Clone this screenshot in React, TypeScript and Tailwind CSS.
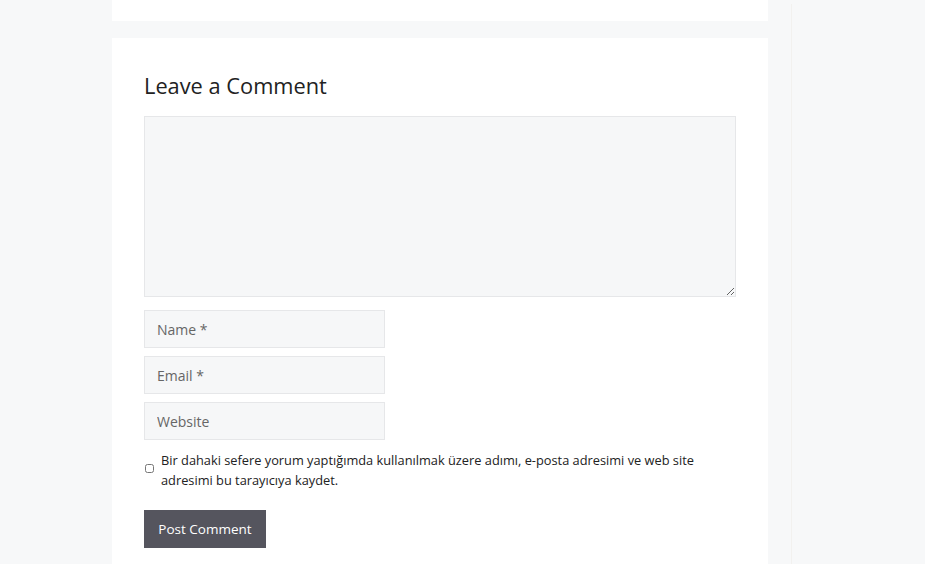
import React from 'react';

export default function App() {
  return (
    <div className="min-h-[564px] bg-[#f7f8f9] font-['Open_Sans',sans-serif] text-[#222]">
      <div className="flex">
        <main className="ml-[112px] w-[656px]">
          <div className="h-[21px] bg-white" />
          <section className="mt-[17px] bg-white px-8 pt-[31px] pb-4">
            <h3 className="text-[21.8px] leading-[34px] text-[#222]">Leave a Comment</h3>
            <form className="mt-[13px]">
              <textarea className="block h-[181px] w-full resize-y border border-[#e6e7e9] bg-[#f6f7f8] outline-none" />
              <div className="mt-[13px] flex flex-col gap-2">
                <input
                  placeholder="Name *"
                  className="h-[38px] w-[241px] border border-[#e6e7e9] bg-[#f6f7f8] px-3 text-[14px] placeholder:text-[#666]"
                />
                <input
                  placeholder="Email *"
                  className="h-[38px] w-[241px] border border-[#e6e7e9] bg-[#f6f7f8] px-3 text-[14px] placeholder:text-[#666]"
                />
                <input
                  placeholder="Website"
                  className="h-[38px] w-[241px] border border-[#e6e7e9] bg-[#f6f7f8] px-3 text-[14px] placeholder:text-[#666]"
                />
              </div>
              <label className="mt-[10px] flex items-start gap-[7px]">
                <input type="checkbox" className="mt-[14px] ml-[1px] h-[9px] w-[9px] shrink-0" />
                <span className="text-[12.8px] leading-[20px] text-[#222]">
                  Bir dahaki sefere yorum yaptığımda kullanılmak üzere adımı, e-posta adresimi ve web site
                  <br />
                  adresimi bu tarayıcıya kaydet.
                </span>
              </label>
              <button
                type="button"
                className="mt-[20px] h-[38px] w-[122px] bg-[#55555e] text-[13.5px] text-white"
              >
                Post Comment
              </button>
            </form>
          </section>
        </main>
        <aside className="ml-[23px] mt-[4px] h-[560px] border-l border-[#f2f1ef]" />
      </div>
    </div>
  );
}
